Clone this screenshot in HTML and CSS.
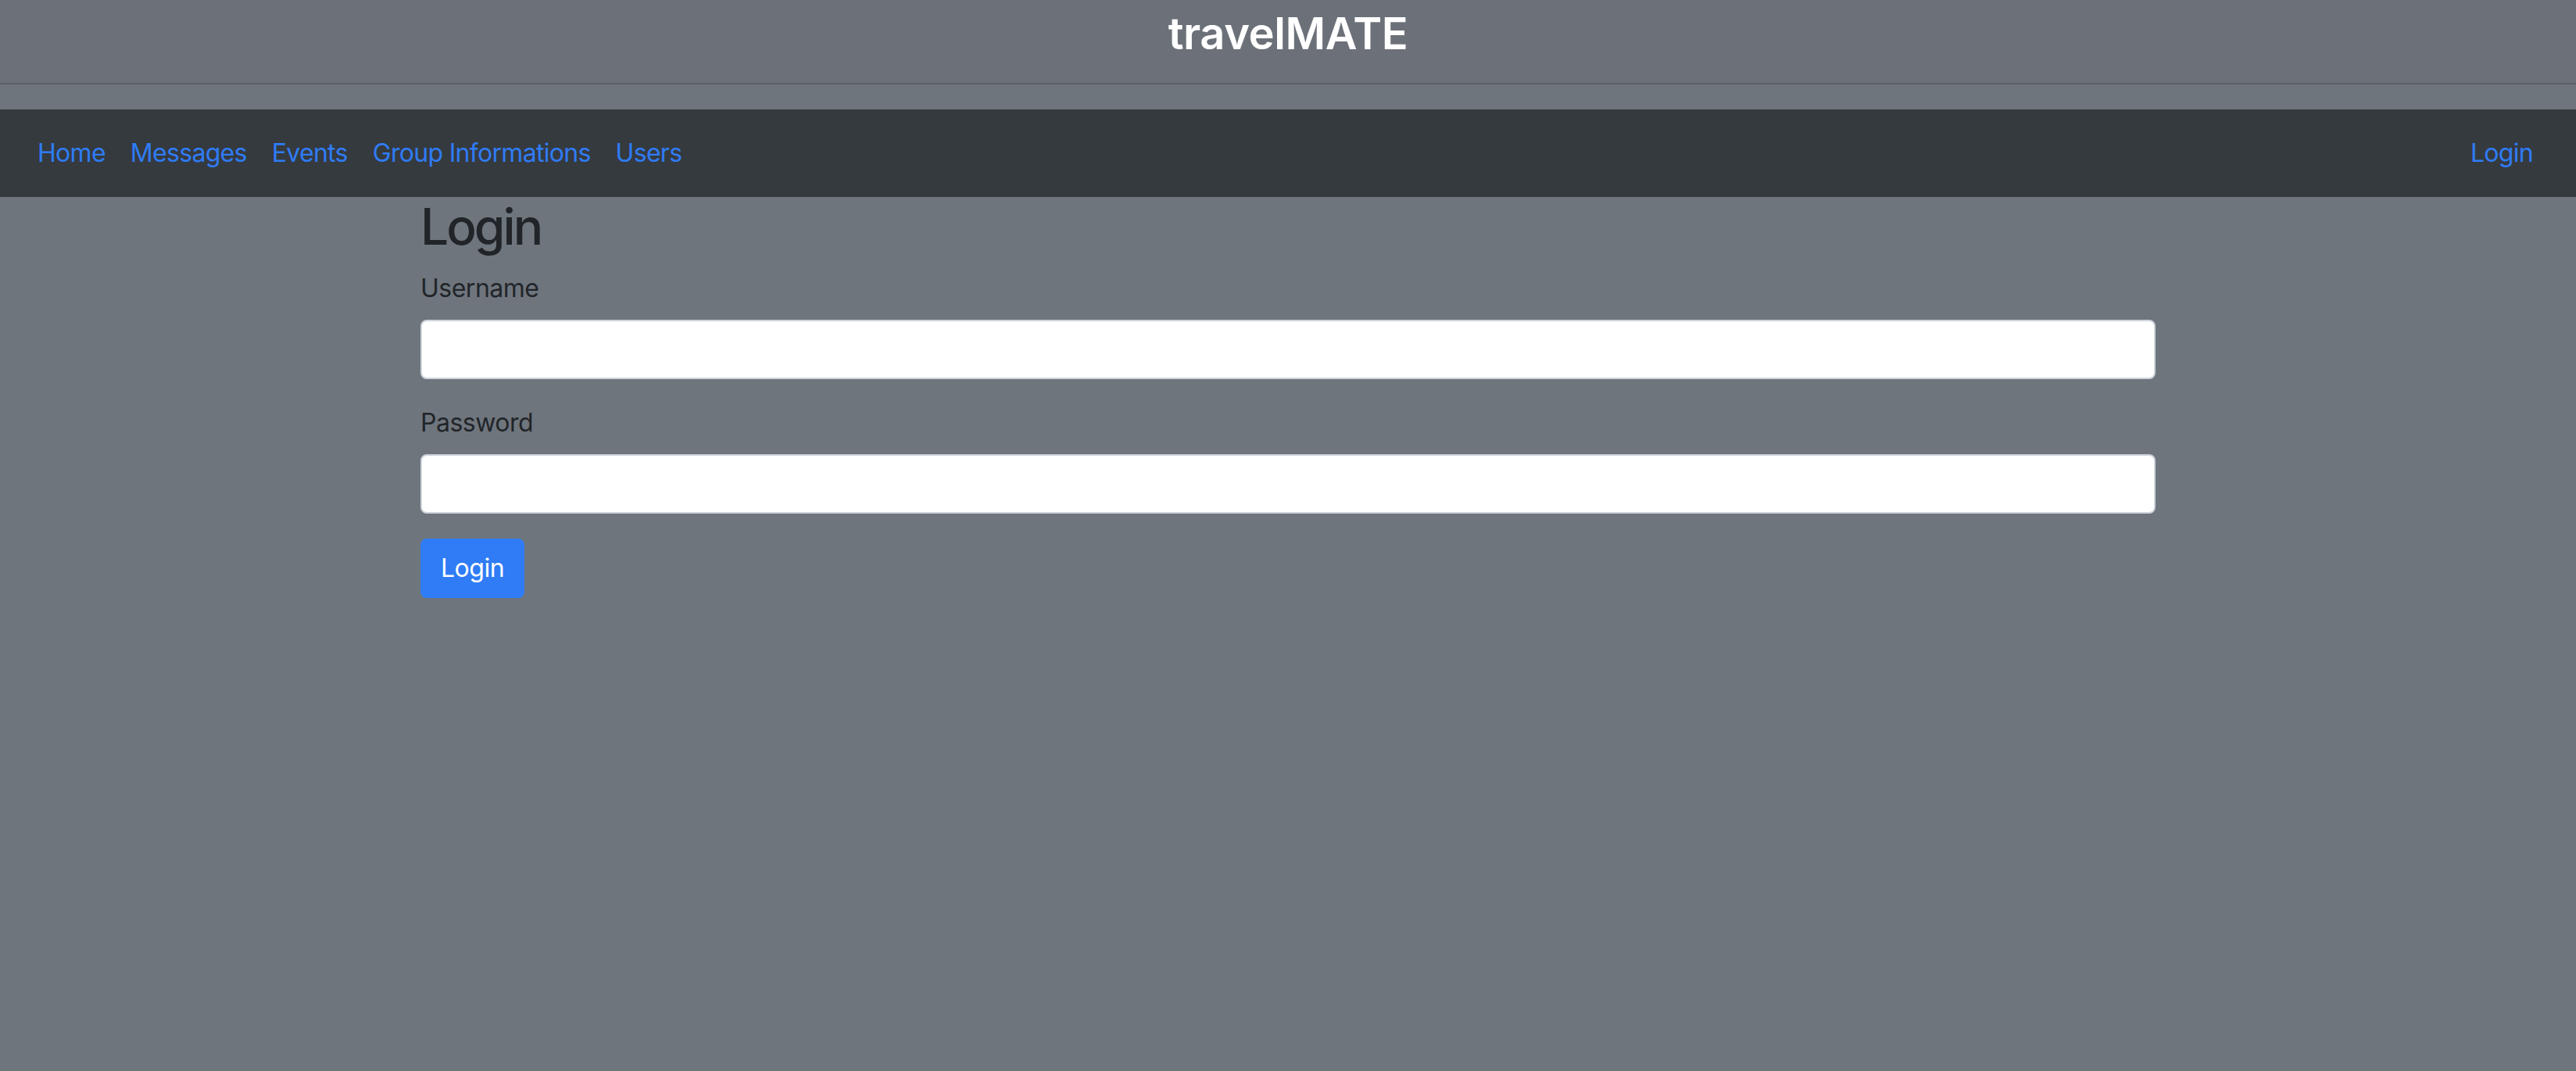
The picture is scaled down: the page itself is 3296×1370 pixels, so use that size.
FILE: index.html
```html
<!DOCTYPE html>
<html lang="en">
<head>
<meta charset="utf-8">
<title>travelMATE</title>
<link rel="stylesheet" href="styles.css">
</head>
<body>
<header class="site-header">
  <div class="brand">travelMATE</div>
</header>
<nav class="navbar">
  <ul class="nav-list">
    <li><a class="nav-link" href="#">Home</a></li>
    <li><a class="nav-link" href="#">Messages</a></li>
    <li><a class="nav-link" href="#">Events</a></li>
    <li><a class="nav-link" href="#">Group Informations</a></li>
    <li><a class="nav-link" href="#">Users</a></li>
  </ul>
  <ul class="nav-list">
    <li><a class="nav-link" href="#">Login</a></li>
  </ul>
</nav>
<main class="container">
  <h2 class="page-title">Login</h2>
  <form class="login-form">
    <div class="form-group">
      <label class="form-label" for="username">Username</label>
      <input class="form-control" id="username" type="text">
    </div>
    <div class="form-group">
      <label class="form-label" for="password">Password</label>
      <input class="form-control" id="password" type="password">
    </div>
    <button class="btn-primary" type="button">Login</button>
  </form>
</main>
</body>
</html>
```
FILE: styles.css
```css
* { box-sizing: border-box; }
html, body { margin: 0; padding: 0; }
body {
  background: #6f757d;
  font-family: Inter, "Noto Sans", sans-serif;
  color: #212529;
  font-size: 32px;
  line-height: 1.5;
}
.site-header {
  background: #6c7179;
  border-bottom: 2px solid #5b6067;
  height: 108px;
  padding-top: 10px;
  text-align: center;
  margin-bottom: 32px;
}
.brand {
  color: #ffffff;
  font-size: 56px;
  font-weight: 600;
  line-height: 1.2;
  letter-spacing: -0.4px;
}
.navbar {
  background: #353a3f;
  height: 112px;
  padding: 0 39px 0 32px;
  display: flex;
  align-items: center;
  justify-content: space-between;
}
.nav-list {
  list-style: none;
  margin: 0;
  padding: 0;
  display: flex;
}
.nav-link {
  display: block;
  padding: 16px 16px;
  color: #2f7cf6;
  text-decoration: none;
  font-size: 32px;
  line-height: 48px;
  letter-spacing: -0.7px;
}
.container {
  width: 2280px;
  margin: 0 auto;
  padding: 0 30px;
}
.page-title {
  margin: 0 0 16px;
  font-size: 64px;
  font-weight: 500;
  line-height: 1.2;
  color: #212529;
  letter-spacing: -3px;
}
.form-group { margin-bottom: 32px; }
.form-label {
  display: inline-block;
  margin-bottom: 16px;
  font-size: 32px;
  line-height: 48px;
  letter-spacing: -0.5px;
}
.form-control {
  display: block;
  width: 100%;
  height: 76px;
  padding: 12px 24px;
  font-size: 32px;
  border: 2px solid #ced4da;
  border-radius: 8px;
  background: #ffffff;
}
.btn-primary {
  display: inline-block;
  padding: 12px 24px;
  font-family: inherit;
  font-size: 32px;
  line-height: 48px;
  color: #ffffff;
  background: #2f7cf6;
  border: 2px solid #2f7cf6;
  border-radius: 8px;
  letter-spacing: -0.5px;
}
```
